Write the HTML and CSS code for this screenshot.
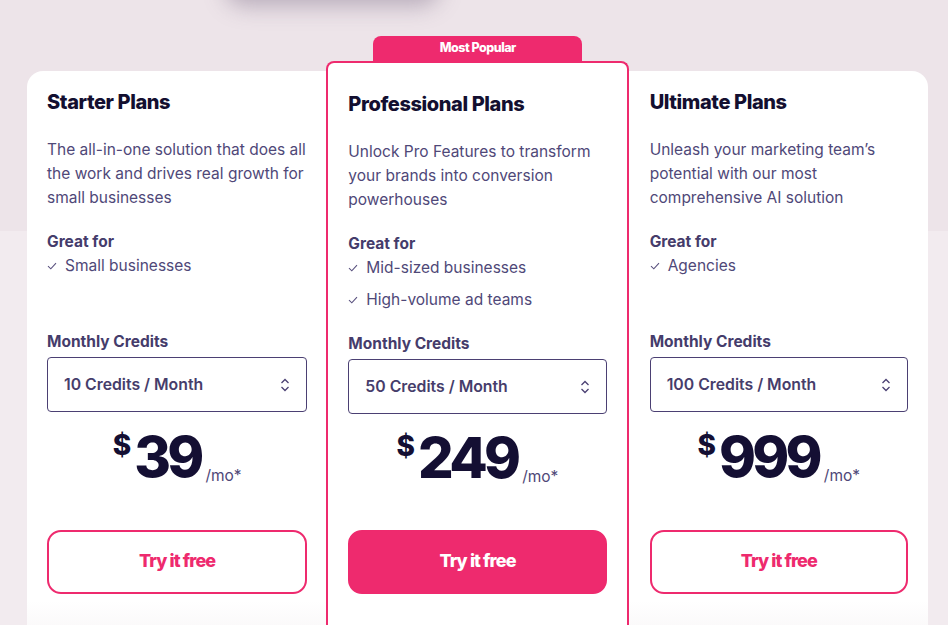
FILE: index.html
```html
<!DOCTYPE html>
<html lang="en">
<head>
<meta charset="utf-8">
<title>Plans</title>
<link rel="stylesheet" href="styles.css">
</head>
<body>
<div class="glow"></div>
<main class="plans">
  <section class="card">
    <h2 class="title">Starter Plans</h2>
    <p class="desc">The all-in-one solution that does all the work and drives real growth for small businesses</p>
    <div class="features">
      <h3 class="label">Great for</h3>
      <ul class="list">
        <li><svg class="check" viewBox="0 0 10 8"><polyline points="1,4.2 3.8,6.8 9,1.2"/></svg>Small businesses</li>
      </ul>
    </div>
    <h3 class="label">Monthly Credits</h3>
    <div class="select"><span>10 Credits / Month</span><svg class="chev" viewBox="0 0 10 16"><polyline points="1.5,6 5,2.5 8.5,6"/><polyline points="1.5,10 5,13.5 8.5,10"/></svg></div>
    <div class="price"><span class="cur">$</span><span class="amt">39</span><span class="per">/mo*</span></div>
    <a class="btn">Try it free</a>
  </section>
  <section class="card popular">
    <div class="badge">Most Popular</div>
    <h2 class="title">Professional Plans</h2>
    <p class="desc">Unlock Pro Features to transform your brands into conversion powerhouses</p>
    <div class="features">
      <h3 class="label">Great for</h3>
      <ul class="list">
        <li><svg class="check" viewBox="0 0 10 8"><polyline points="1,4.2 3.8,6.8 9,1.2"/></svg>Mid-sized businesses</li>
        <li><svg class="check" viewBox="0 0 10 8"><polyline points="1,4.2 3.8,6.8 9,1.2"/></svg>High-volume ad teams</li>
      </ul>
    </div>
    <h3 class="label">Monthly Credits</h3>
    <div class="select"><span>50 Credits / Month</span><svg class="chev" viewBox="0 0 10 16"><polyline points="1.5,6 5,2.5 8.5,6"/><polyline points="1.5,10 5,13.5 8.5,10"/></svg></div>
    <div class="price"><span class="cur">$</span><span class="amt">249</span><span class="per">/mo*</span></div>
    <a class="btn filled">Try it free</a>
  </section>
  <section class="card last">
    <h2 class="title">Ultimate Plans</h2>
    <p class="desc">Unleash your marketing team’s potential with our most comprehensive AI solution</p>
    <div class="features">
      <h3 class="label">Great for</h3>
      <ul class="list">
        <li><svg class="check" viewBox="0 0 10 8"><polyline points="1,4.2 3.8,6.8 9,1.2"/></svg>Agencies</li>
      </ul>
    </div>
    <h3 class="label">Monthly Credits</h3>
    <div class="select"><span>100 Credits / Month</span><svg class="chev" viewBox="0 0 10 16"><polyline points="1.5,6 5,2.5 8.5,6"/><polyline points="1.5,10 5,13.5 8.5,10"/></svg></div>
    <div class="price"><span class="cur">$</span><span class="amt">999</span><span class="per">/mo*</span></div>
    <a class="btn">Try it free</a>
  </section>
</main>
</body>
</html>
```
FILE: styles.css
```css
* { box-sizing: border-box; }
html, body { margin: 0; height: 625px; overflow: hidden; }
body {
  font-family: Inter, "Noto Sans", sans-serif;
  background: linear-gradient(to bottom, #ede4e9 0, #ede4e9 231px, #f2ebef 231px);
  position: relative;
}
.glow {
  position: absolute;
  left: 225px;
  top: -40px;
  width: 215px;
  height: 40px;
  border-radius: 30px;
  box-shadow: 0 6px 22px rgba(120, 105, 130, 0.45);
  background: #e6dde3;
}
.plans {
  margin: 71px 0 0 27px;
  width: 901px;
  height: 620px;
  background: linear-gradient(to bottom, #fff 0, #fff 530px, #faf8f9 560px);
  border-radius: 16px 16px 0 0;
  display: grid;
  grid-template-columns: 1fr 1fr 1fr;
}
.card {
  padding: 19px 20px 40px 20px;
  display: flex;
  flex-direction: column;
}
.card.last { padding-left: 22px; padding-right: 20px; }
.card.popular {
  position: relative;
  margin: -10px -1px 0;
  border: 2px solid #ee2a6e;
  border-bottom: none;
  border-radius: 8px 8px 0 0;
  padding: 29px 20px 40px;
  background: #fff;
}
.badge {
  position: absolute;
  left: 45px;
  top: -27px;
  width: 209px;
  height: 25px;
  background: #ee2a6e;
  border-radius: 8px 8px 0 0;
  color: #fff;
  font-weight: 800;
  font-size: 12.5px;
  letter-spacing: -0.5px;
  text-align: center;
  line-height: 23px;
}
.title {
  margin: 0;
  font-size: 20px;
  line-height: 24px;
  font-weight: 800;
  letter-spacing: -0.4px;
  color: #130f30;
}
.desc {
  margin: 24px 0 0;
  font-size: 15.5px;
  line-height: 24px;
  color: #4f4878;
}
.features {
  margin-top: 20px;
  min-height: 100px;
}
.label {
  margin: 0;
  font-size: 15.5px;
  line-height: 24px;
  font-weight: 700;
  color: #453c6b;
}
.list {
  list-style: none;
  margin: 0;
  padding: 0;
  display: flex;
  flex-direction: column;
  gap: 8px;
}
.list li {
  display: flex;
  align-items: center;
  font-size: 15.5px;
  line-height: 24px;
  color: #4f4878;
}
.check {
  width: 10px;
  height: 8px;
  margin-right: 8px;
  fill: none;
  stroke: #5a527f;
  stroke-width: 1.1;
}
.select {
  margin-top: 3px;
  height: 55px;
  border: 1.5px solid #4b4073;
  border-radius: 4px;
  display: flex;
  align-items: center;
  justify-content: space-between;
  padding: 0 16px 0 16px;
  font-size: 15.8px;
  font-weight: 600;
  color: #463d6b;
}
.chev {
  width: 10px;
  height: 16px;
  fill: none;
  stroke: #4b4073;
  stroke-width: 1.3;
}
.price {
  margin-top: 15px;
  height: 60px;
  line-height: 60px;
  text-align: center;
  white-space: nowrap;
  color: #140f33;
}
.popular .price { margin-top: 14px; }
.cur {
  font-size: 28px;
  font-weight: 800;
  vertical-align: 22px;
  line-height: 28px;
  margin-right: 3px;
}
.amt {
  font-size: 56px;
  font-weight: 800;
  letter-spacing: -3.8px;
}
.per {
  font-size: 15.5px;
  color: #4f4878;
  margin-left: 5px;
  vertical-align: -4px;
}
.btn {
  margin-top: 43px;
  height: 64px;
  border: 2px solid #ee2a6e;
  border-radius: 14px;
  display: flex;
  align-items: center;
  justify-content: center;
  padding-bottom: 3px;
  font-size: 18px;
  font-weight: 800;
  letter-spacing: -0.9px;
  color: #ee2a6e;
  background: #fff;
}
.popular .btn { margin-top: 42px; }
.btn.filled {
  background: #ee2a6e;
  color: #fff;
}
```
